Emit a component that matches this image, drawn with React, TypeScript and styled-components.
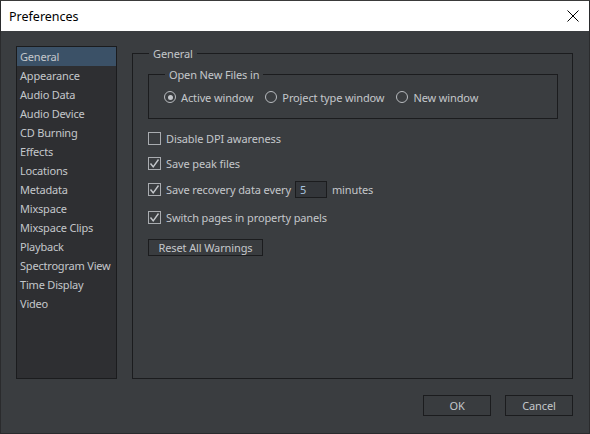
import React from 'react'
import styled, { createGlobalStyle } from 'styled-components'

const GlobalStyle = createGlobalStyle`
  html, body {
    margin: 0;
    padding: 0;
    background: #3a3d40;
  }
  body {
    font-family: "Noto Sans", "Open Sans", sans-serif;
    font-size: 11px;
    letter-spacing: -0.12px;
    color: #c4c7cb;
  }
`

const Window = styled.div`
  width: 590px;
  height: 434px;
  box-sizing: border-box;
  display: flex;
  flex-direction: column;
  background: #3a3d40;
  border: 1px solid #2a2b2d;
  border-top-color: #3a3a3a;
`

const TitleBar = styled.div`
  height: 30px;
  flex: none;
  display: flex;
  align-items: center;
  justify-content: space-between;
  padding: 0 10px 0 8px;
  background: #ffffff;
  color: #000000;
  font-size: 12.5px;
  letter-spacing: 0;
`

const CloseButton = styled.div`
  width: 12px;
  height: 12px;
  display: flex;
`

const Body = styled.div`
  flex: 1;
  display: flex;
  flex-direction: column;
  padding: 15px 16px 0 15px;
`

const Columns = styled.div`
  height: 333px;
  display: flex;
  gap: 15px;
`

const Sidebar = styled.ul`
  list-style: none;
  margin: 0;
  padding: 0;
  width: 101px;
  box-sizing: border-box;
  background: #2e2f32;
  border: 1px solid #1b1c1e;
`

const SideItem = styled.li<{ $active?: boolean }>`
  height: 19px;
  line-height: 19px;
  padding-left: 3px;
  white-space: nowrap;
  letter-spacing: -0.2px;
  background: ${p => (p.$active ? '#3b5167' : 'transparent')};
`

const Group = styled.fieldset`
  margin: 0;
  padding: 0 14px 0 15px;
  border: 1px solid #1b1c1e;
  min-width: 0;
`

const MainGroup = styled(Group)`
  flex: 1;
`

const Legend = styled.legend`
  padding: 0 4px;
  margin-left: 1px;
  line-height: 15px;
`

const InnerGroup = styled(Group)`
  margin-top: 6px;
  padding: 0 0 13px 15px;
`

const RadioRow = styled.div`
  margin-top: 7px;
  height: 16px;
  display: flex;
  align-items: center;
  gap: 12px;
`

const Option = styled.label`
  display: flex;
  align-items: center;
  gap: 5px;
  white-space: nowrap;
`

const RadioCircle = styled.span<{ $on?: boolean }>`
  width: 12px;
  height: 12px;
  box-sizing: border-box;
  border-radius: 50%;
  border: 1px solid #b8bbbf;
  display: flex;
  align-items: center;
  justify-content: center;
  &::after {
    content: '';
    width: 5px;
    height: 5px;
    border-radius: 50%;
    background: #c4c7cb;
    display: ${p => (p.$on ? 'block' : 'none')};
  }
`

const CheckRow = styled.div<{ $gap: number }>`
  margin-top: ${p => p.$gap}px;
  min-height: 16px;
  display: flex;
  align-items: center;
  gap: 5px;
  white-space: nowrap;
`

const Box = styled.span`
  width: 13px;
  height: 13px;
  box-sizing: border-box;
  border: 1px solid #a9acb0;
  display: flex;
  align-items: center;
  justify-content: center;
  flex: none;
`

const NumberField = styled.div`
  width: 32px;
  height: 17px;
  box-sizing: border-box;
  margin-left: -1px;
  padding-left: 4px;
  border: 1px solid #1b1c1e;
  background: #33363a;
  color: #a9c3df;
  line-height: 15px;
`

const Button = styled.div<{ $w: number }>`
  width: ${p => p.$w}px;
  height: 21px;
  box-sizing: border-box;
  display: flex;
  align-items: center;
  justify-content: center;
  background: #393c3f;
  border: 1px solid #1b1c1e;
  white-space: nowrap;
`

const SmallButton = styled(Button)`
  height: 17px;
  margin-top: 14px;
`

const Footer = styled.div`
  display: flex;
  justify-content: flex-end;
  gap: 14px;
  margin-top: 16px;
`

const CheckMark = () => (
  <svg width="11" height="11" viewBox="0 0 11 11">
    <path d="M1.5 5.5 L4.2 8.8 L9.5 1.5" fill="none" stroke="#c4c7cb" strokeWidth="1.4" />
  </svg>
)

const Check = ({ on, children, gap }: { on?: boolean; children: React.ReactNode; gap: number }) => (
  <CheckRow $gap={gap}>
    <Box>{on && <CheckMark />}</Box>
    {children}
  </CheckRow>
)

const pages = [
  'General',
  'Appearance',
  'Audio Data',
  'Audio Device',
  'CD Burning',
  'Effects',
  'Locations',
  'Metadata',
  'Mixspace',
  'Mixspace Clips',
  'Playback',
  'Spectrogram View',
  'Time Display',
  'Video',
]

export default function App() {
  return (
    <>
      <GlobalStyle />
      <Window>
        <TitleBar>
          <span>Preferences</span>
          <CloseButton>
            <svg width="12" height="12" viewBox="0 0 12 12">
              <path d="M0.5 0.5 L11.5 11.5 M11.5 0.5 L0.5 11.5" stroke="#000" strokeWidth="1" />
            </svg>
          </CloseButton>
        </TitleBar>
        <Body>
          <Columns>
            <Sidebar>
              {pages.map((p, i) => (
                <SideItem key={p} $active={i === 0}>
                  {p}
                </SideItem>
              ))}
            </Sidebar>
            <MainGroup>
              <Legend>General</Legend>
              <InnerGroup>
                <Legend>Open New Files in</Legend>
                <RadioRow>
                  <Option>
                    <RadioCircle $on />
                    Active window
                  </Option>
                  <Option>
                    <RadioCircle />
                    Project type window
                  </Option>
                  <Option>
                    <RadioCircle />
                    New window
                  </Option>
                </RadioRow>
              </InnerGroup>
              <Check gap={11}>Disable DPI awareness</Check>
              <Check gap={9} on>
                Save peak files
              </Check>
              <CheckRow $gap={10}>
                <Box>
                  <CheckMark />
                </Box>
                Save recovery data every
                <NumberField>5</NumberField>
                <span>minutes</span>
              </CheckRow>
              <Check gap={11} on>
                Switch pages in property panels
              </Check>
              <SmallButton $w={115}>Reset All Warnings</SmallButton>
            </MainGroup>
          </Columns>
          <Footer>
            <Button $w={68}>OK</Button>
            <Button $w={68}>Cancel</Button>
          </Footer>
        </Body>
      </Window>
    </>
  )
}
